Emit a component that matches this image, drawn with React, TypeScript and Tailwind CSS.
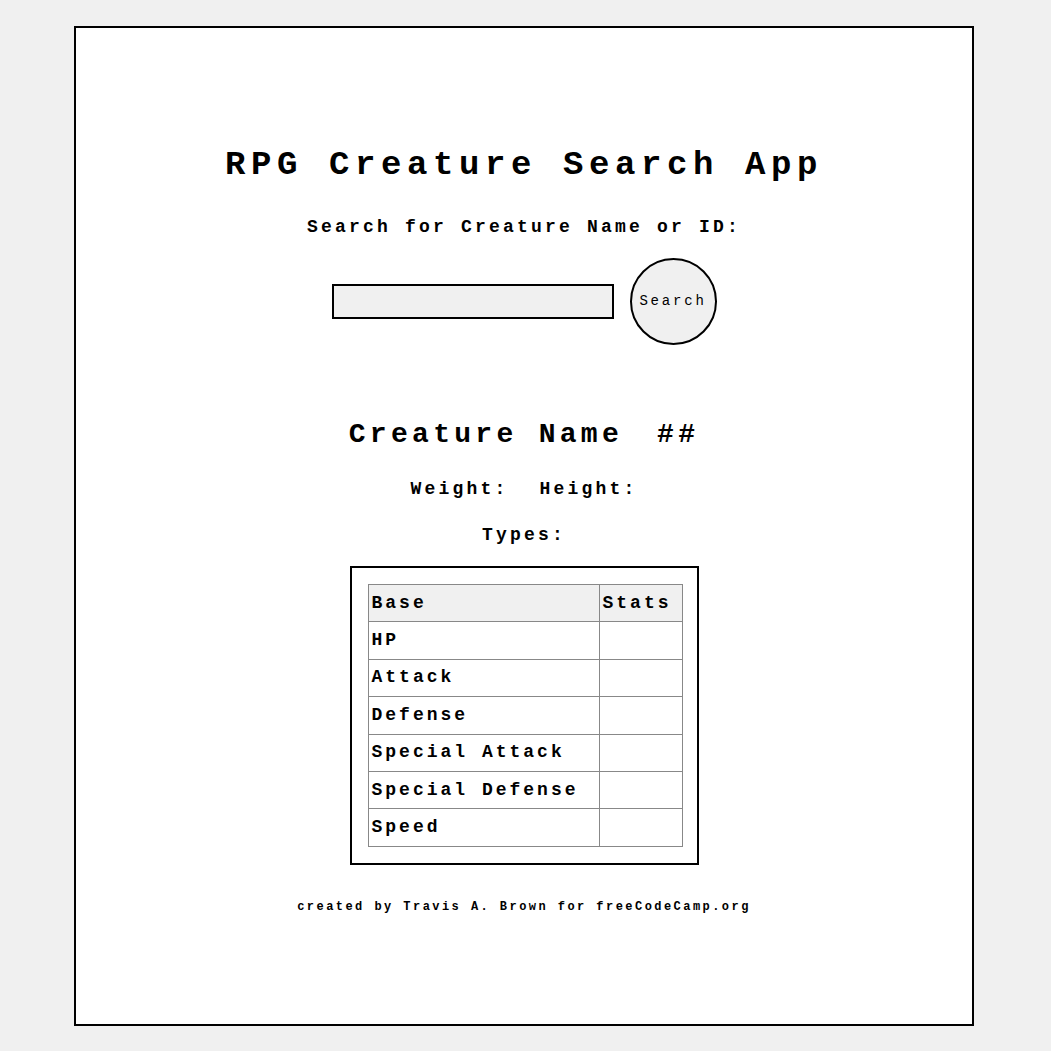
import React from 'react';

const stats = ['HP', 'Attack', 'Defense', 'Special Attack', 'Special Defense', 'Speed'];

export default function App() {
  return (
    <div className="min-h-[1051px] bg-[#f0f0f0] pt-[26px] pb-[25px] font-['Liberation_Mono','Courier_New',monospace] text-black">
      <main className="ml-[74px] flex h-[1000px] w-[900px] flex-col items-center border-2 border-black bg-white">
        <h1 className="mt-[117px] text-[34px] leading-[40px] font-bold tracking-[5.6px]">RPG Creature Search App</h1>
        <label htmlFor="search-input" className="mt-[30px] text-[18px] leading-[24px] font-bold tracking-[3.2px]">
          Search for Creature Name or ID:
        </label>

        {/* search row */}
        <div className="mt-[19px] flex items-center gap-4">
          <input id="search-input" className="h-[35px] w-[282px] border-2 border-black bg-[#f0f0f0] outline-none" />
          <button className="h-[87px] w-[87px] rounded-full border-2 border-black bg-[#f0f0f0] text-[14px] tracking-[2.8px]">
            Search
          </button>
        </div>

        <h2 className="mt-[72px] flex gap-[34px] text-[28px] leading-[36px] font-bold tracking-[4.3px]">
          <span>Creature Name</span>
          <span>##</span>
        </h2>
        <div className="mt-[24px] flex gap-[31px] text-[18px] leading-[24px] font-bold tracking-[3.2px]">
          <span>Weight:</span>
          <span>Height:</span>
        </div>
        <div className="mt-[22px] text-[18px] leading-[24px] font-bold tracking-[3.2px]">Types:</div>

        {/* stats table */}
        <div className="mt-[19px] w-[349px] border-2 border-black p-4">
          <table className="w-[315px] border-collapse text-left text-[18px] font-bold tracking-[3px]">
            <thead>
              <tr className="bg-[#f0f0f0]">
                <th className="h-[37.4px] w-[231px] border border-[#888] px-[3px] font-bold">Base</th>
                <th className="h-[37.4px] border border-[#888] px-[3px] font-bold">Stats</th>
              </tr>
            </thead>
            <tbody>
              {stats.map((s) => (
                <tr key={s}>
                  <td className="h-[37.4px] border border-[#888] px-[3px]">{s}</td>
                  <td className="h-[37.4px] border border-[#888] px-[3px]"></td>
                </tr>
              ))}
            </tbody>
          </table>
        </div>

        <footer className="mt-[34px] text-[12px] leading-[16px] font-bold tracking-[2.45px]">
          created by Travis A. Brown for freeCodeCamp.org
        </footer>
      </main>
    </div>
  );
}
